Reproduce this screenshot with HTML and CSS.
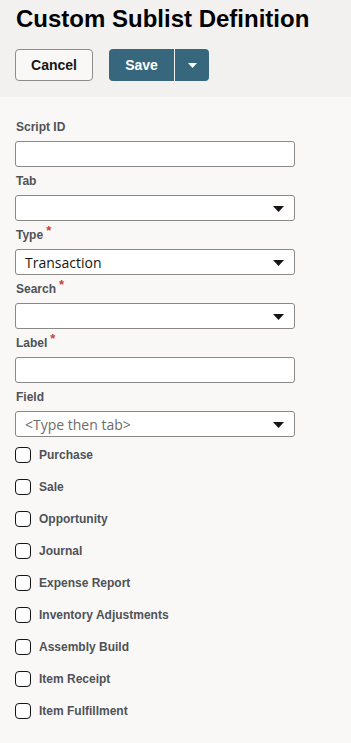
FILE: index.html
```html
<!DOCTYPE html>
<html>
<head>
<meta charset="utf-8">
<link rel="stylesheet" href="styles.css">
</head>
<body>
<header class="header">
  <h1 class="title">Custom Sublist Definition</h1>
  <div class="actions">
    <button class="btn btn-secondary">Cancel</button>
    <div class="split">
      <button class="btn btn-primary">Save</button>
      <button class="btn btn-primary btn-menu" aria-label="More">
        <svg width="9" height="5" viewBox="0 0 9 5"><path d="M0 0h9L4.5 5z" fill="#fff"/></svg>
      </button>
    </div>
  </div>
</header>
<main class="form">
  <div class="field">
    <div class="label">Script ID</div>
    <div class="control"></div>
  </div>
  <div class="field">
    <div class="label">Tab</div>
    <div class="control select"><span class="value"></span><svg class="arrow" width="11" height="6" viewBox="0 0 11 6"><path d="M0 0h11L5.5 6z" fill="#161513"/></svg></div>
  </div>
  <div class="field">
    <div class="label">Type<span class="req">*</span></div>
    <div class="control select"><span class="value">Transaction</span><svg class="arrow" width="11" height="6" viewBox="0 0 11 6"><path d="M0 0h11L5.5 6z" fill="#161513"/></svg></div>
  </div>
  <div class="field">
    <div class="label">Search<span class="req">*</span></div>
    <div class="control select"><span class="value"></span><svg class="arrow" width="11" height="6" viewBox="0 0 11 6"><path d="M0 0h11L5.5 6z" fill="#161513"/></svg></div>
  </div>
  <div class="field">
    <div class="label">Label<span class="req">*</span></div>
    <div class="control"></div>
  </div>
  <div class="field">
    <div class="label">Field</div>
    <div class="control select"><span class="value placeholder">&lt;Type then tab&gt;</span><svg class="arrow" width="11" height="6" viewBox="0 0 11 6"><path d="M0 0h11L5.5 6z" fill="#161513"/></svg></div>
  </div>
  <ul class="checks">
    <li class="check"><span class="box"></span>Purchase</li>
    <li class="check"><span class="box"></span>Sale</li>
    <li class="check"><span class="box"></span>Opportunity</li>
    <li class="check"><span class="box"></span>Journal</li>
    <li class="check"><span class="box"></span>Expense Report</li>
    <li class="check"><span class="box"></span>Inventory Adjustments</li>
    <li class="check"><span class="box"></span>Assembly Build</li>
    <li class="check"><span class="box"></span>Item Receipt</li>
    <li class="check"><span class="box"></span>Item Fulfillment</li>
  </ul>
</main>
</body>
</html>
```
FILE: styles.css
```css
* { box-sizing: border-box; }
html, body { margin: 0; padding: 0; }
body {
  background: #f9f8f7;
  font-family: "Liberation Sans", Arial, sans-serif;
  color: #161513;
  width: 351px;
  min-height: 743px;
}
.header {
  background: #f2f1f0;
  padding: 5px 15px 16px 15px;
}
.title {
  margin: 0 0 0 1px;
  font-size: 24px;
  line-height: 28px;
  font-weight: bold;
  color: #000;
}
.actions {
  display: flex;
  gap: 16px;
  margin-top: 16px;
}
.btn {
  font-family: "Liberation Sans", Arial, sans-serif;
  font-weight: bold;
  font-size: 14px;
  height: 32px;
  border-radius: 4px;
  cursor: pointer;
  padding: 0;
  margin: 0;
}
.btn-secondary {
  width: 78px;
  background: #f9f8f7;
  border: 1px solid #8e8c89;
  color: #161513;
}
.split {
  display: flex;
  gap: 1px;
  background: #f2f1f0;
}
.btn-primary {
  background: #36677d;
  color: #fff;
  border: none;
  width: 65px;
  border-radius: 4px 0 0 4px;
}
.btn-menu {
  width: 34px;
  border-radius: 0 4px 4px 0;
  display: flex;
  align-items: center;
  justify-content: center;
}
.form {
  padding: 22px 15px 20px 15px;
}
.field {
  margin-bottom: 6px;
  width: 280px;
}
.label {
  font-size: 12px;
  line-height: 16px;
  font-weight: bold;
  color: #4f5257;
  margin: 0 0 6px 1px;
}
.req {
  color: #c74634;
  font-size: 13px;
  position: relative;
  top: -4px;
  margin-left: 3px;
}
.control {
  height: 26px;
  background: #fff;
  border: 1px solid #8b8986;
  border-radius: 3px;
  display: flex;
  align-items: center;
  padding: 0 9px;
}
.select { justify-content: space-between; }
.value {
  font-family: "Open Sans", "Noto Sans", sans-serif;
  font-size: 14px;
  color: #161513;
}
.placeholder { color: #6f6c69; }
.arrow { margin-right: 1px; margin-top: 1px; }
.checks {
  list-style: none;
  margin: 10px 0 0 0;
  padding: 0;
  display: flex;
  flex-direction: column;
  gap: 16px;
}
.check {
  display: flex;
  align-items: center;
  gap: 8px;
  height: 16px;
  font-size: 12px;
  font-weight: bold;
  color: #4f5257;
}
.box {
  width: 16px;
  height: 16px;
  border: 1.5px solid #161513;
  border-radius: 4px;
  background: #fff;
  flex: none;
}
```
